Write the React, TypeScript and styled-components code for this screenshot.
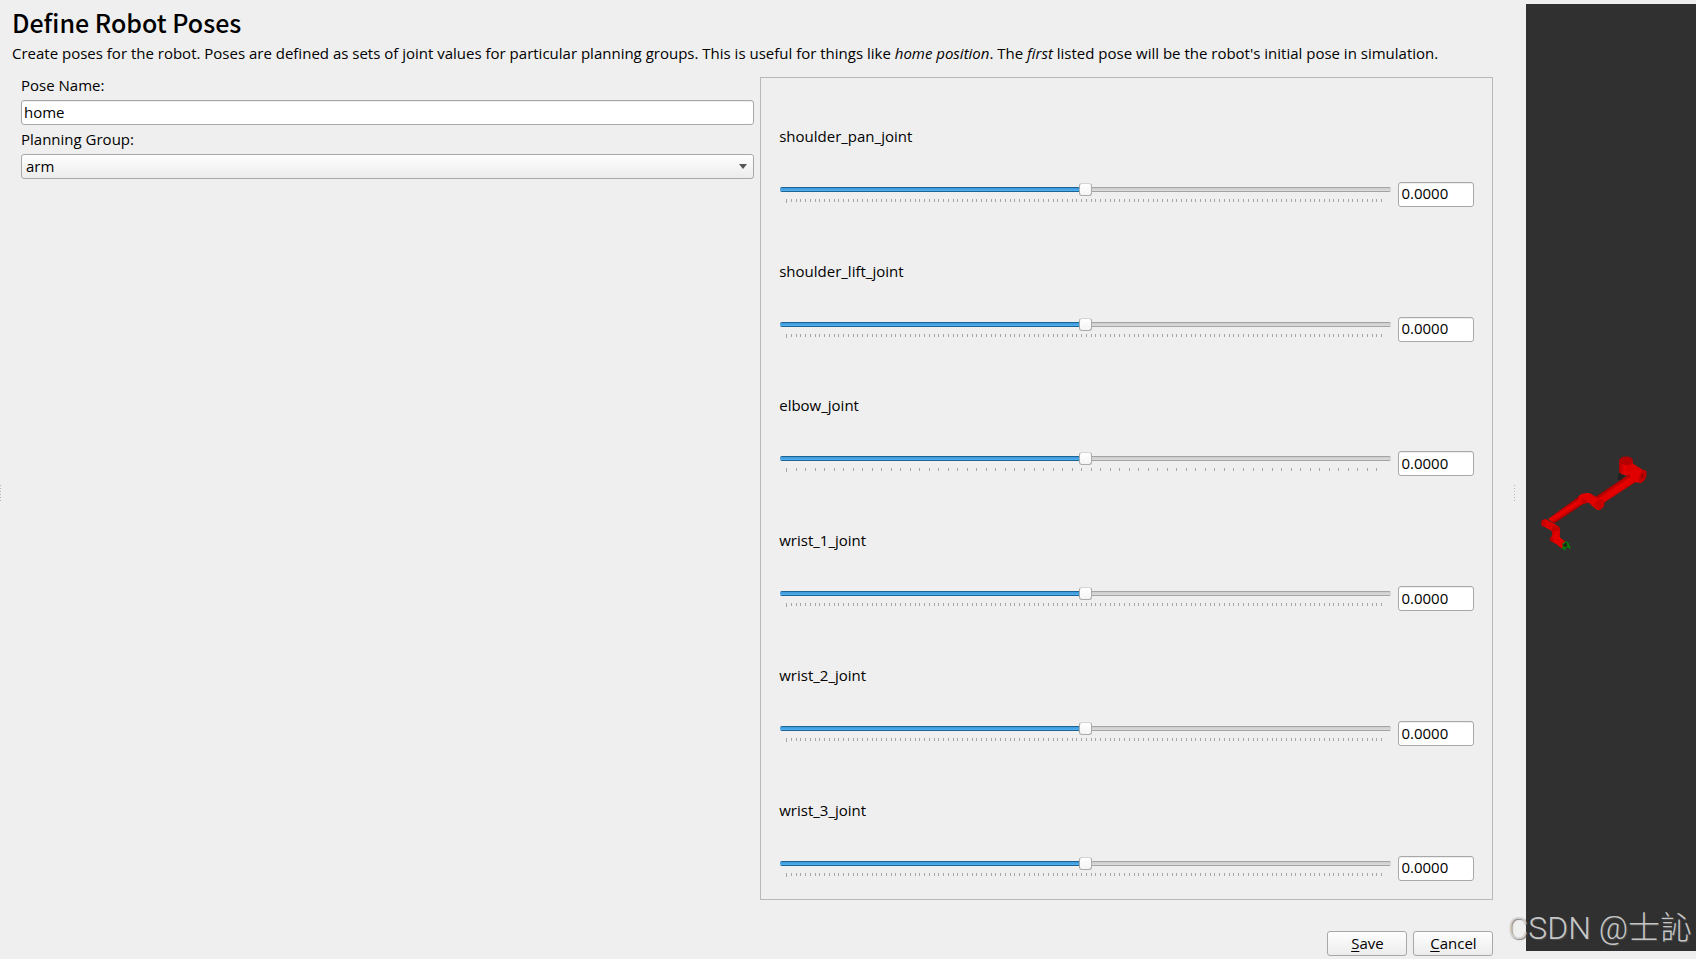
import React, { useState } from "react";
import styled, { createGlobalStyle } from "styled-components";

const GlobalStyle = createGlobalStyle`
  *, *::before, *::after { box-sizing: border-box; }
  html, body { margin: 0; padding: 0; background: #efefef; }
  body, input, select, button {
    font-family: "Open Sans", "Noto Sans", sans-serif;
    font-size: 15px;
    line-height: 18px;
    color: #000;
  }
`;

const Window = styled.div`
  position: relative;
  display: flex;
  min-height: 100vh;
  background: #efefef;
`;

const EdgeHandle = styled.div`
  flex: 0 0 12px;
  display: flex;
  align-items: center;
  padding-top: 27px;
`;

const Grip = styled.div`
  width: 1px;
  height: 16px;
  background: repeating-linear-gradient(#b4b4b4 0 1px, transparent 1px 3px);
`;

const Splitter = styled.div`
  flex: 0 0 33px;
  display: flex;
  align-items: center;
  justify-content: center;
  padding: 27px 0 0 10px;
`;

const Main = styled.main`
  flex: 1;
  min-width: 0;
  display: flex;
  flex-direction: column;
  padding: 7px 0 3px;
`;

const Title = styled.h1`
  margin: 0;
  font-family: "Noto Sans CJK SC", "Noto Sans", sans-serif;
  font-size: 25px;
  line-height: 30px;
  font-weight: 500;
`;

const Description = styled.p`
  margin: 6px 0 14px;
  line-height: 20px;
`;

const Columns = styled.div`
  flex: 1;
  display: grid;
  grid-template-columns: 1fr 1fr;
  gap: 6px;
  padding-left: 9px;
`;

const Form = styled.form`
  display: flex;
  flex-direction: column;
  gap: 6px;
`;

const Field = styled.div`
  display: flex;
  flex-direction: column;
  gap: 7px;
`;

const FieldLabel = styled.label`
  line-height: 16px;
`;

const TextBox = styled.input`
  width: 100%;
  height: 25px;
  padding: 0 2px 2px;
  border: 1px solid #a8a8a8;
  border-radius: 3px;
  background: #fff;
  box-shadow: inset 0 1px 0 #ededed;
  outline: none;
`;

const SelectWrap = styled.div`
  position: relative;
  height: 25px;
`;

const Select = styled.select`
  appearance: none;
  display: block;
  width: 100%;
  height: 25px;
  padding: 0 24px 2px 4px;
  border: 1px solid #a8a8a8;
  border-radius: 3px;
  background: linear-gradient(#fefefe, #ececec);
  outline: none;
`;

const Arrow = styled.svg`
  position: absolute;
  right: 7px;
  top: 10px;
  pointer-events: none;
`;

const JointPanel = styled.section`
  display: flex;
  flex-direction: column;
  padding: 0 18px 12px;
  border: 1px solid #b8b8b8;
`;

const Joint = styled.div`
  flex: 1;
  display: flex;
  flex-direction: column;
  justify-content: flex-end;
  gap: 38px;
  padding-bottom: 6px;
`;

const JointControls = styled.div`
  display: flex;
  gap: 7px;
`;

const SliderColumn = styled.div`
  flex: 1;
  min-width: 0;
  display: flex;
  flex-direction: column;
  gap: 3px;
  padding: 1px 0 0 1px;
`;

const Slider = styled.input<{ $fill: number }>`
  appearance: none;
  width: 100%;
  height: 13px;
  margin: 0;
  background: transparent;
  outline: none;

  &::-webkit-slider-runnable-track {
    height: 5px;
    border-radius: 2px;
    background:
      linear-gradient(#1d6494 0 1px, #3d97d8 1px, #51b1f0 4px, #1d6494 4px) 0 0 / ${(p) => p.$fill}% 100% no-repeat,
      linear-gradient(#a4a4a4 0 1px, #cdcdcd 1px, #dcdcdc 4px, #a4a4a4 4px);
  }

  &::-webkit-slider-thumb {
    appearance: none;
    width: 13px;
    height: 13px;
    margin-top: -4px;
    border: 1px solid #ababab;
    border-top-color: #d4d4d4;
    border-radius: 3px;
    background: linear-gradient(#fff, #f4f4f4);
  }
`;

const TickSvg = styled.svg`
  display: block;
  width: calc(100% - 13px);
  height: 5px;
  margin-left: 6px;
  overflow: visible;
`;

const ValueBox = styled(TextBox)`
  flex: none;
  width: 76px;
`;

const Actions = styled.div`
  display: flex;
  justify-content: flex-end;
  gap: 6px;
  padding-top: 31px;
`;

const Button = styled.button`
  width: 80px;
  height: 25px;
  padding: 0 0 2px;
  border: 1px solid #a8a8a8;
  border-radius: 3px;
  background: linear-gradient(#fefefe, #ececec);

  &::first-letter {
    text-decoration: underline;
    text-underline-offset: 2px;
  }
`;

const Viewport = styled.aside`
  flex: 0 0 10%;
  margin: 4px 0 8px;
  display: flex;
  background: #303030;
`;

const Scene = styled.svg`
  width: 100%;
  height: auto;
`;

const Watermark = styled.div`
  position: absolute;
  right: 4px;
  bottom: 9px;
  font-family: Roboto, "Noto Sans CJK SC", sans-serif;
  font-size: 32px;
  font-weight: 300;
  line-height: 44px;
  color: rgba(212, 212, 212, 0.92);
  text-shadow: 1px 1px 1px rgba(90, 90, 90, 0.7);
  white-space: nowrap;
  pointer-events: none;
`;

const joints = [
  { name: "shoulder_pan_joint", limit: 6.2832 },
  { name: "shoulder_lift_joint", limit: 6.2832 },
  { name: "elbow_joint", limit: 3.1416 },
  { name: "wrist_1_joint", limit: 6.2832 },
  { name: "wrist_2_joint", limit: 6.2832 },
  { name: "wrist_3_joint", limit: 6.2832 },
];

function Ticks({ limit }: { limit: number }) {
  const spans = (limit * 2) / 0.1;
  const count = Math.floor(spans) + 1;
  return (
    <TickSvg aria-hidden="true" shapeRendering="crispEdges">
      {Array.from({ length: count }, (_, i) => (
        <rect key={i} x={`${(i / spans) * 100}%`} width="1" height={i === 0 ? 4 : 3} fill="#a6a6a6" />
      ))}
    </TickSvg>
  );
}

function JointRow({ name, limit }: { name: string; limit: number }) {
  const [value, setValue] = useState(0);
  return (
    <Joint>
      <FieldLabel htmlFor={name}>{name}</FieldLabel>
      <JointControls>
        <SliderColumn>
          <Slider
            id={name}
            type="range"
            min={-limit}
            max={limit}
            step="any"
            value={value}
            $fill={50 + (value / limit) * 50}
            onChange={(e) => setValue(Number(e.target.value))}
          />
          <Ticks limit={limit} />
        </SliderColumn>
        <ValueBox
          aria-label={`${name} value`}
          value={value.toFixed(4)}
          onChange={(e) => setValue(Number(e.target.value) || 0)}
        />
      </JointControls>
    </Joint>
  );
}

function RobotArm() {
  return (
    <Scene viewBox="0 0 170 947" role="img" aria-label="Robot arm">
      <defs>
        <linearGradient id="upper-arm" gradientUnits="userSpaceOnUse" x1="338" y1="136" x2="360" y2="168">
          <stop offset="0" stopColor="#9c0000" />
          <stop offset="0.35" stopColor="#e60000" />
          <stop offset="0.65" stopColor="#e00000" />
          <stop offset="1" stopColor="#960000" />
        </linearGradient>
        <linearGradient id="forearm" gradientUnits="userSpaceOnUse" x1="193" y1="200" x2="207" y2="222">
          <stop offset="0" stopColor="#a00000" />
          <stop offset="0.35" stopColor="#e80000" />
          <stop offset="0.65" stopColor="#e00000" />
          <stop offset="1" stopColor="#980000" />
        </linearGradient>
        <linearGradient id="post" x1="0" x2="1">
          <stop offset="0" stopColor="#b00000" />
          <stop offset="0.4" stopColor="#e80000" />
          <stop offset="1" stopColor="#c00000" />
        </linearGradient>
      </defs>
      <g transform="translate(-26 436) scale(0.3333)">
        <path d="M357 98L352 119L366 120L374 106Z" fill="#222" />
        <path d="M358 61V97Q366 108 382 104L399 76V61Z" fill="url(#post)" />
        <path d="M396 68L431 91L408 126L376 104Q386 100 387 88Z" fill="#dc0000" />
        <path d="M388 103L408 126L309 191L288 170Z" fill="url(#upper-arm)" />
        <path d="M388 103Q399 86 418 91L438 98L425 129L407 127Q396 120 388 103Z" fill="#e00000" />
        <ellipse cx="429" cy="109" rx="10" ry="20" transform="rotate(20 429 109)" fill="#c20000" />
        <path d="M426 101L432 99L430 112L425 117Z" fill="#900000" />
        <ellipse cx="379" cy="62" rx="21" ry="13" fill="#b40000" />
        <path d="M238 169L254 190L163 251L144 237Z" fill="url(#forearm)" />
        <path d="M236 169Q248 157 271 160L285 169L308 182L289 209L266 188L247 193Q236 188 236 169Z" fill="#e00000" />
        <path d="M247 176L260 182L258 189L247 192Z" fill="#c00000" />
        <ellipse cx="299" cy="194" rx="14" ry="17" transform="rotate(32 299 194)" fill="#c80000" />
        <path d="M126 240L137 237L172 257L162 277L125 256Z" fill="#dc0000" />
        <ellipse cx="130" cy="250" rx="6" ry="10" fill="#c40000" />
        <path d="M156 265V289L150 292V303L170 313L186 326L197 306L180 294V264Z" fill="url(#post)" />
        <ellipse cx="167" cy="266" rx="12" ry="9" fill="#c60000" />
        <path d="M156 284Q165 296 178 291L196 307L186 325L160 304Z" fill="#e00000" />
        <path d="M150 291L160 300L157 306L150 302Z" fill="#b40000" />
        <path d="M187 311L199 304L206 311L203 323L190 328Z" fill="#087b0b" />
        <path d="M190 313L200 309L204 316L197 322L190 318Z" fill="#172718" />
        <path d="M203 306L213 325L208 327L202 315Z M187 322L198 329L196 332L186 325Z" fill="#078609" />
      </g>
    </Scene>
  );
}

export default function App() {
  const [poseName, setPoseName] = useState("home");
  return (
    <>
      <GlobalStyle />
      <Window>
        <EdgeHandle>
          <Grip />
        </EdgeHandle>
        <Main>
          <Title>Define Robot Poses</Title>
          <Description>
            Create poses for the robot. Poses are defined as sets of joint values for particular planning groups. This is
            useful for things like <em>home position</em>. The <em>first</em> listed pose will be the robot's initial pose
            in simulation.
          </Description>
          <Columns>
            <Form id="pose-form" onSubmit={(e) => e.preventDefault()}>
              <Field>
                <FieldLabel htmlFor="pose-name">Pose Name:</FieldLabel>
                <TextBox id="pose-name" value={poseName} onChange={(e) => setPoseName(e.target.value)} />
              </Field>
              <Field>
                <FieldLabel htmlFor="planning-group">Planning Group:</FieldLabel>
                <SelectWrap>
                  <Select id="planning-group" defaultValue="arm">
                    <option value="arm">arm</option>
                  </Select>
                  <Arrow width="8" height="5" viewBox="0 0 8 5" aria-hidden="true">
                    <path d="M0 0H8L4 5Z" fill="#555" />
                  </Arrow>
                </SelectWrap>
              </Field>
            </Form>
            <JointPanel>
              {joints.map((joint) => (
                <JointRow key={joint.name} {...joint} />
              ))}
            </JointPanel>
          </Columns>
          <Actions>
            <Button type="submit" form="pose-form">Save</Button>
            <Button type="button">Cancel</Button>
          </Actions>
        </Main>
        <Splitter>
          <Grip />
        </Splitter>
        <Viewport>
          <RobotArm />
        </Viewport>
        <Watermark>CSDN @士訫</Watermark>
      </Window>
    </>
  );
}
